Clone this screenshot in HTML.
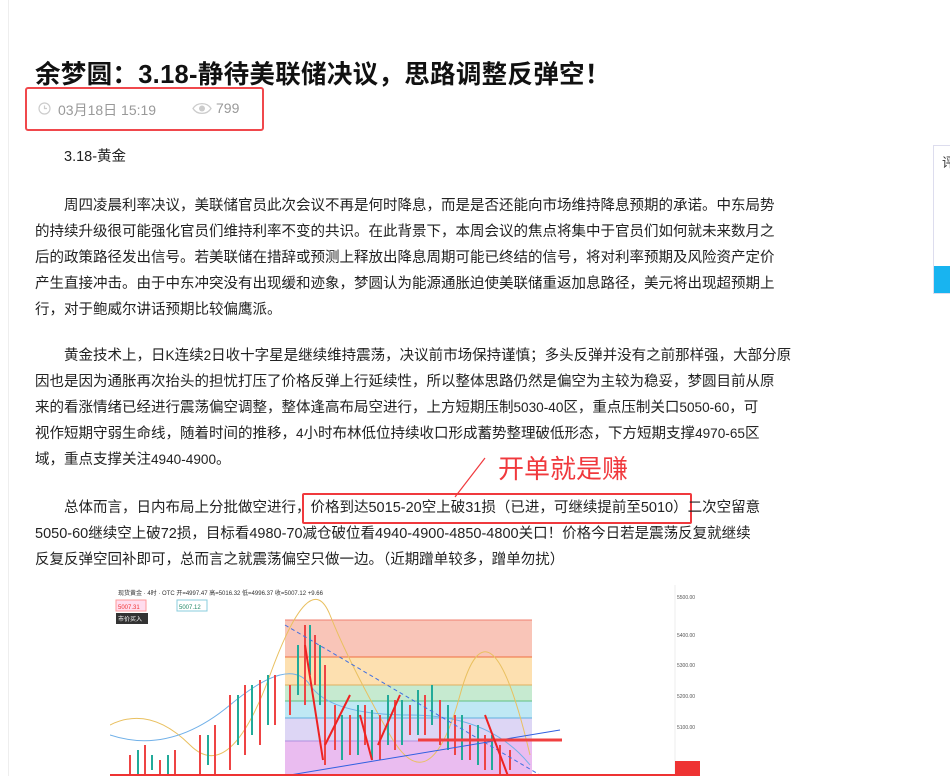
<!DOCTYPE html>
<html><head><meta charset="utf-8"><style>
body{margin:0;width:950px;height:776px;overflow:hidden;background:#fff;font-family:"Liberation Sans","Noto Sans CJK SC",sans-serif;position:relative}
.vl{position:absolute;left:8px;top:0;width:1px;height:776px;background:#eee}
h1{position:absolute;left:35px;top:54px;margin:0;font-size:25.5px;font-weight:bold;color:#111;white-space:nowrap;letter-spacing:0.3px}
.meta{position:absolute;left:25px;top:87px;width:235px;height:40px;border:2px solid #f0484c;border-radius:3px;color:#999;font-size:14px}
.p{position:absolute;left:35px;font-size:14.5px;color:#222;line-height:26px;white-space:nowrap}
.n{font-size:13.6px}
.right{position:absolute;left:933px;top:145px;width:20px;height:147px;border:1px solid #dde;background:#fff}
</style></head><body>
<div class="vl"></div>
<h1>余梦圆：3.18-静待美联储决议，思路调整反弹空！</h1>
<div class="meta">
<svg style="position:absolute;left:11px;top:13px" width="13" height="13" viewBox="0 0 13 13"><circle cx="6.5" cy="6.5" r="5.5" fill="none" stroke="#ccc" stroke-width="1.2"/><path d="M6.5 3.5V6.5H9" fill="none" stroke="#ccc" stroke-width="1.2"/></svg>
<span style="position:absolute;left:31px;top:11px">03月18日 15:19</span>
<svg style="position:absolute;left:165px;top:13px" width="20" height="13" viewBox="0 0 20 13"><path d="M1 6.5C5 0 15 0 19 6.5C15 13 5 13 1 6.5Z" fill="none" stroke="#ccc" stroke-width="1.3"/><circle cx="10" cy="6.5" r="3" fill="#ccc"/></svg>
<span style="position:absolute;left:189px;top:11px">799</span>
</div>
<div class="p" style="top:144px;left:64px">3.18-黄金</div>
<div class="p" style="top:193px">　　周四凌晨利率决议，美联储官员此次会议不再是何时降息，而是是否还能向市场维持降息预期的承诺。中东局势<br>的持续升级很可能强化官员们维持利率不变的共识。在此背景下，本周会议的焦点将集中于官员们如何就未来数月之<br>后的政策路径发出信号。若美联储在措辞或预测上释放出降息周期可能已终结的信号，将对利率预期及风险资产定价<br>产生直接冲击。由于中东冲突没有出现缓和迹象，梦圆认为能源通胀迫使美联储重返加息路径，美元将出现超预期上<br>行，对于鲍威尔讲话预期比较偏鹰派。</div>
<div class="p" style="top:343px">　　黄金技术上，日<span class="n">K</span>连续<span class="n">2</span>日收十字星是继续维持震荡，决议前市场保持谨慎；多头反弹并没有之前那样强，大部分原<br>因也是因为通胀再次抬头的担忧打压了价格反弹上行延续性，所以整体思路仍然是偏空为主较为稳妥，梦圆目前从原<br>来的看涨情绪已经进行震荡偏空调整，整体逢高布局空进行，上方短期压制<span class="n">5030-40</span>区，重点压制关口<span class="n">5050-60</span>，可<br>视作短期守弱生命线，随着时间的推移，<span class="n">4</span>小时布林低位持续收口形成蓄势整理破低形态，下方短期支撑<span class="n">4970-65</span>区<br>域，重点支撑关注<span class="n">4940-4900</span>。</div>
<div style="position:absolute;left:498px;top:449px;font-size:26px;color:#f0393d">开单就是赚</div>
<svg style="position:absolute;left:450px;top:455px" width="40" height="45"><line x1="35" y1="3" x2="5" y2="42" stroke="#f0393d" stroke-width="1.2"/></svg>
<div style="position:absolute;left:302px;top:493px;width:386px;height:27px;border:2px solid #f0393d;border-radius:2px"></div>
<div class="p" style="top:495px">　　总体而言，日内布局上分批做空进行，价格到达5015-20空上破31损（已进，可继续提前至5010）二次空留意<br>5050-60继续空上破72损，目标看4980-70减仓破位看4940-4900-4850-4800关口！价格今日若是震荡反复就继续<br>反复反弹空回补即可，总而言之就震荡偏空只做一边。（近期蹭单较多，蹭单勿扰）</div>
<div class="right"><div style="position:absolute;left:0;top:120px;width:20px;height:27px;background:#18b4f0"></div><span style="position:absolute;left:8px;top:6px;font-size:13px;color:#333">评</span></div>
<svg style="position:absolute;left:110px;top:585px" width="590" height="191" viewBox="0 0 590 191">
<rect width="590" height="191" fill="#fff"/>
<rect x="175" y="35" width="247" height="37" fill="#f9c5b8"/><line x1="175" y1="35" x2="422" y2="35" stroke="#f08070"/>
<rect x="175" y="72" width="247" height="28" fill="#fde0b0"/><line x1="175" y1="72" x2="422" y2="72" stroke="#f07040"/>
<rect x="175" y="100" width="247" height="16" fill="#c6ead0"/><line x1="175" y1="100" x2="422" y2="100" stroke="#e0b060"/>
<rect x="175" y="116" width="247" height="17" fill="#bfe8f4"/><line x1="175" y1="116" x2="422" y2="116" stroke="#60c080"/>
<rect x="175" y="133" width="247" height="23" fill="#ddd6f5"/><line x1="175" y1="133" x2="422" y2="133" stroke="#60b0e0"/>
<rect x="175" y="156" width="247" height="35" fill="#eabcf0"/><line x1="175" y1="156" x2="422" y2="156" stroke="#b090e0"/>
<line x1="565" y1="0" x2="565" y2="191" stroke="#eee"/>
<text x="8" y="10" font-size="6" fill="#333">现货黄金 · 4时 · OTC   开=4997.47 高=5016.32 低=4996.37 收=5007.12 +9.66</text>
<rect x="6" y="15" width="30" height="11" fill="#fde" stroke="#f99"/><text x="8" y="24" font-size="6" fill="#e33">5007.31</text>
<rect x="67" y="15" width="30" height="11" fill="#fff" stroke="#8cd"/><text x="69" y="24" font-size="6" fill="#286">5007.12</text>
<rect x="6" y="28" width="32" height="11" fill="#333"/><text x="8" y="36" font-size="6" fill="#fff">市价买入</text>
<text x="567" y="14" font-size="5" fill="#555">5500.00</text><text x="567" y="52" font-size="5" fill="#555">5400.00</text><text x="567" y="82" font-size="5" fill="#555">5300.00</text><text x="567" y="113" font-size="5" fill="#555">5200.00</text><text x="567" y="144" font-size="5" fill="#555">5100.00</text>
<rect x="565" y="176" width="25" height="15" fill="#e33"/>
<path d="M0 140 Q40 120 80 160 T160 90 T220 30 T280 150 T350 110 T420 170" fill="none" stroke="#e9c060" stroke-width="1"/>
<path d="M0 150 Q60 170 120 120 T200 100 T300 130 T420 180" fill="none" stroke="#70b0e8" stroke-width="1"/>
<g stroke-width="2">
<path d="M20 191V170M35 191V160M50 191V175M65 191V165M90 191V150M105 191V140M120 185V110M135 170V100M150 160V95M165 140V90M180 130V100M195 120V40M205 100V50M215 180V80M225 165V120M240 170V130M255 160V120M270 175V130M285 165V115M300 150V120M315 150V110M330 160V115M345 170V130M360 175V140M375 185V150M390 190V160M400 185V165" stroke="#e44"/>
<path d="M28 191V165M42 185V170M58 191V170M98 180V150M128 160V110M142 150V100M158 140V90M188 110V60M200 90V40M210 120V60M232 175V130M248 170V120M262 175V125M278 160V110M292 160V115M308 150V105M322 140V100M338 165V120M352 175V130M368 180V140M382 185V150" stroke="#2a9"/>
</g>
<line x1="175" y1="40" x2="430" y2="190" stroke="#4070e0" stroke-dasharray="4 3"/>
<line x1="180" y1="190" x2="450" y2="145" stroke="#3060e0"/>
<line x1="308" y1="155" x2="452" y2="155" stroke="#f04040" stroke-width="3"/>
<path d="M195 60 L213 175 M215 160 L240 110 M250 130 L262 175 M268 160 L290 110 M375 130 L398 191" stroke="#e22" stroke-width="2" fill="none"/>
<line x1="0" y1="190" x2="590" y2="190" stroke="#e33" stroke-width="2"/>
</svg>
</body></html>
